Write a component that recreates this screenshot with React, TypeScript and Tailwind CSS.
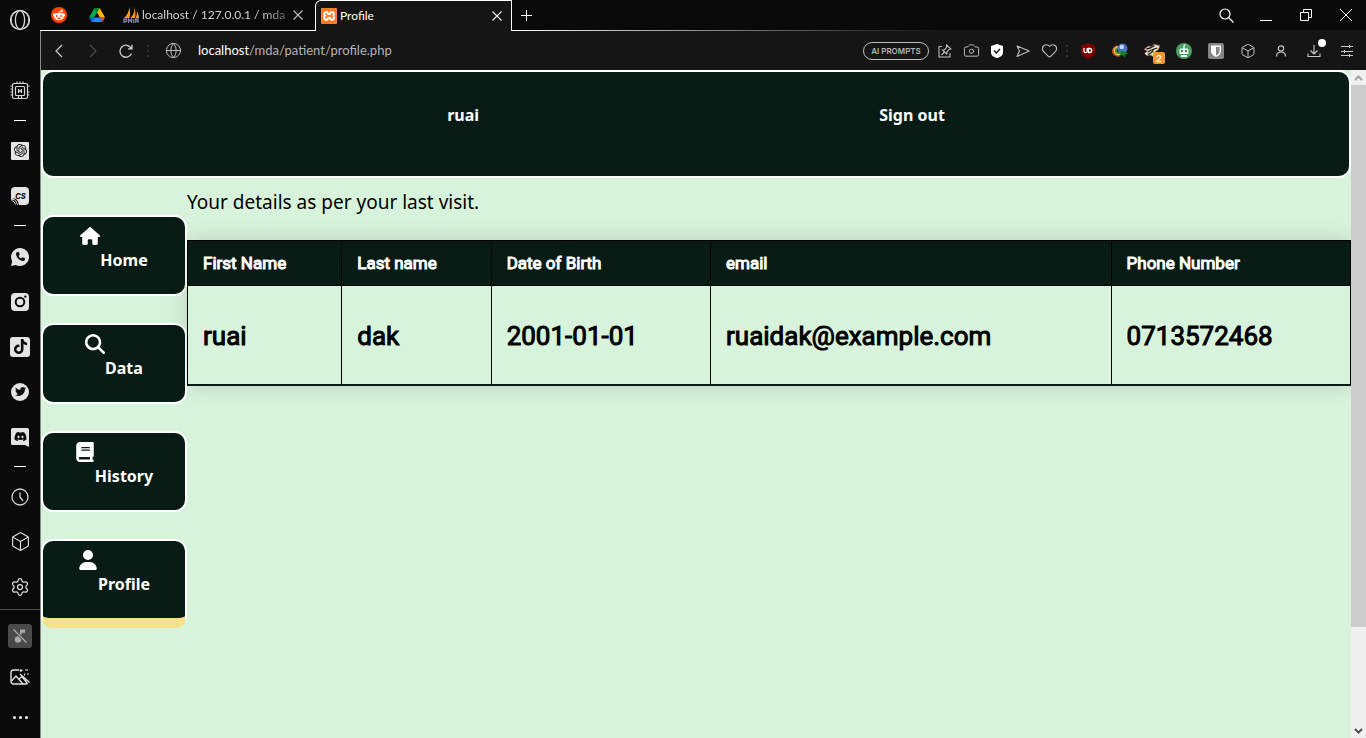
import type { ReactNode } from "react";
import {
  FaBook,
  FaDiscord,
  FaHouse,
  FaMagnifyingGlass,
  FaPhone,
  FaRedditAlien,
  FaTiktok,
  FaTwitter,
  FaUser,
} from "react-icons/fa6";
import { SiOpenai, SiXampp } from "react-icons/si";
import { Box, Camera, Globe, Heart, Settings } from "lucide-react";

const uiFont = "font-['Lato','Noto_Sans',sans-serif]";

function OperaIcon() {
  return (
    <svg width="22" height="22" viewBox="0 0 22 22" fill="none" stroke="#d6d6d6" strokeWidth="1.3">
      <circle cx="11" cy="11" r="9.5" />
      <ellipse cx="11" cy="11" rx="4.6" ry="9.3" />
      <path d="M8 2.4a9.3 9.3 0 0 0 0 17.2M14 2.4a9.3 9.3 0 0 1 0 17.2" strokeWidth="1" />
    </svg>
  );
}

function ChipIcon() {
  return (
    <svg width="20" height="20" viewBox="0 0 20 20" fill="none" stroke="#d6d6d6" strokeWidth="1.2">
      <rect x="2.500" y="2.500" width="15" height="15" rx="1.5" />
      <rect x="5.500" y="5.500" width="9" height="9" rx="1" />
      <path d="M8.6 8v4M11.4 8v4M8.6 10h2.8" strokeWidth="1.3" />
      <path d="M7 2.500V.5M10 2.500V.5M13 2.500V.5M8.500 17.500v-3M11.500 17.500v-3M2.500 5H.5M2.500 8H.5M2.500 11H.5M2.500 14H.5M19.500 5h-2M19.500 11h-2M19.500 14h-2" />
    </svg>
  );
}

function CsIcon() {
  return (
    <svg width="20" height="20" viewBox="0 0 20 20">
      <path d="M5 1h10a4 4 0 0 1 4 4v10a4 4 0 0 1-4 4H9C8.500 16 7 13 4.500 12.500L1 13V5a4 4 0 0 1 4-4z" fill="#e4e4e4" />
      <path d="M1 13.500c2.500-.5 4.500 0 5.500 2.500.5 1 .5 2 1.500 3M1.500 14.500c2 .5 3.500 2 4 4" fill="none" stroke="#e4e4e4" strokeWidth="1" />
      <text x="10.500" y="13" fontSize="7.500" fontWeight="800" fontStyle="italic" textAnchor="middle" fill="#111" fontFamily="Inter, sans-serif">
        CS
      </text>
    </svg>
  );
}

function WhatsappIcon() {
  return (
    <span className="relative flex size-5 items-center justify-center">
      <svg className="absolute inset-0" width="20" height="20" viewBox="0 0 20 20">
        <path d="M10 1a9 9 0 1 1-4.300 16.900L1 19l1.200-4.600A9 9 0 0 1 10 1z" fill="#e4e4e4" />
      </svg>
      <FaPhone className="relative size-[9px] text-[#0c0c0c]" />
    </span>
  );
}

function InstagramIcon() {
  return (
    <svg width="20" height="20" viewBox="0 0 20 20">
      <rect x="1" y="1" width="18" height="18" rx="4" fill="#e4e4e4" />
      <circle cx="10" cy="10" r="4.300" fill="none" stroke="#0c0c0c" strokeWidth="2" />
      <circle cx="15.300" cy="4.600" r="1.200" fill="#0c0c0c" />
    </svg>
  );
}

function DiscordIcon() {
  return (
    <span className="relative flex size-5 items-center justify-center">
      <svg className="absolute inset-0" width="20" height="20" viewBox="0 0 20 20">
        <path d="M2.500 1h15A1.500 1.500 0 0 1 19 2.500V20l-4-2H2.500A1.500 1.500 0 0 1 1 16.500v-14A1.500 1.500 0 0 1 2.500 1z" fill="#e4e4e4" />
      </svg>
      <FaDiscord className="relative size-[13px] text-[#0c0c0c]" />
    </span>
  );
}

function ClockIcon() {
  return (
    <svg width="18" height="18" viewBox="0 0 18 18" fill="none" stroke="#d6d6d6" strokeWidth="1.300">
      <circle cx="9" cy="9" r="8" />
      <path d="M9 4.500V9l3 4" />
    </svg>
  );
}

function MutedMusicIcon() {
  return (
    <svg width="24" height="24" viewBox="0 0 24 24">
      <rect width="24" height="24" rx="3" fill="#4a4a4a" />
      <circle cx="10" cy="15.500" r="3.200" fill="#a9a9a9" />
      <path d="M12 15.500V5.500h5v3.200h-3.500v7z" fill="#a9a9a9" />
      <path d="M5.500 5.500l13 13" stroke="#4a4a4a" strokeWidth="3" />
      <path d="M5.500 5.500l13 13" stroke="#a9a9a9" strokeWidth="1.300" />
    </svg>
  );
}

function ImageSparkleIcon() {
  return (
    <svg width="20" height="18" viewBox="0 0 20 18" fill="none" stroke="#e4e4e4" strokeWidth="1.400">
      <path d="M9 2H3.500A2.500 2.500 0 0 0 1 4.500v9A2.500 2.500 0 0 0 3.500 16h12a2.500 2.500 0 0 0 2-1" />
      <path d="M1.500 13l4.500-5 7 8M9 11l3-2.500 5 6.500" />
      <path d="M10 6l9.500 8.500" />
      <path d="M11 1v3M9.500 2.500h3M15 2h3M17 6h2M14.500 5.500v2" strokeWidth="1.200" />
    </svg>
  );
}

function DriveIcon() {
  return (
    <svg width="16" height="14" viewBox="0 0 87 78">
      <path d="M6.600 66.850l3.850 6.650c.8 1.400 1.950 2.500 3.300 3.300L27.500 53H0c0 1.550.4 3.100 1.200 4.500z" fill="#0066da" />
      <path d="M43.650 25L29.900 1.200c-1.350.8-2.500 1.900-3.300 3.300L1.200 48.500A9 9 0 0 0 0 53h27.500z" fill="#00ac47" />
      <path d="M73.550 76.800c1.350-.8 2.500-1.900 3.300-3.300l9.250-16c.8-1.400.9-2.950.9-4.500H59.800l5.850 11.500z" fill="#ea4335" />
      <path d="M43.650 25L57.400 1.200C56.050.4 54.500 0 52.900 0H34.400c-1.600 0-3.150.45-4.500 1.200z" fill="#00832d" />
      <path d="M59.800 53H27.500L13.750 76.800c1.350.8 2.900 1.200 4.500 1.200h50.800c1.600 0 3.150-.45 4.500-1.200z" fill="#2684fc" />
      <path d="M73.400 26.500l-12.700-22c-.8-1.400-1.950-2.500-3.300-3.300L43.650 25 59.800 53h27.450c0-1.550-.4-3.100-1.200-4.500z" fill="#ffba00" />
    </svg>
  );
}

function PhpMyAdminIcon() {
  return (
    <svg width="16" height="16" viewBox="0 0 16 16">
      <path d="M6 0C6.500 4 4 8.500 1 11h5.500C7.500 7 7.300 3 6 0z" fill="#f89c0e" />
      <path d="M11 0c1 4-.5 8-3.500 11h4.500C13 7 12.300 3 11 0z" fill="#f89c0e" />
      <path d="M13.500 4c.8 2.500.2 5-1 7H16C16 8 15 6 13.500 4z" fill="#e0a04c" />
      <path d="M1 16v-4h2.500v2.500H1M5.500 16v-4l1.500 2 1.500-2v4M10.500 16v-4M12.500 16v-4h2.500v4M12.500 14H15" fill="none" stroke="#7c7fb0" strokeWidth="1.300" />
    </svg>
  );
}

function CloseIcon({ color }: { color: string }) {
  return (
    <svg width="10" height="10" viewBox="0 0 10 10" stroke={color} strokeWidth="1.100">
      <path d="M.5.5l9 9M9.500.5l-9 9" />
    </svg>
  );
}

function PinEditIcon() {
  return (
    <svg width="14" height="14" viewBox="0 0 14 14" fill="none" stroke="#bdbdbd" strokeWidth="1.100">
      <path d="M4 2.500H1v10.500h11V9" />
      <path d="M8.500 1l4.500 4-2 .4-2 2.400-.2 2.200L4.500 6l2-.3L8.500 3.500zM6.500 8L3.500 11" />
    </svg>
  );
}

function VerifiedShieldIcon() {
  return (
    <svg width="14" height="16" viewBox="0 0 14 16">
      <path d="M7 1l6 2v6.500c0 3-3 5-6 5.500-3-.5-6-2.500-6-5.500V3z" fill="#fff" />
      <path d="M4 7.500L6.300 10 10 6" fill="none" stroke="#151515" strokeWidth="1.400" />
    </svg>
  );
}

function SendIcon() {
  return (
    <svg width="14" height="14" viewBox="0 0 14 14" fill="none" stroke="#bdbdbd" strokeWidth="1.100" strokeLinejoin="round">
      <path d="M1 2l12.300 5L1 12.500 3.500 7z" />
    </svg>
  );
}

function AdShieldIcon() {
  return (
    <svg width="16" height="18" viewBox="0 0 16 18">
      <path d="M8 1c2 1.300 4 1.800 7 2v6c0 4-3 6.500-7 8-4-1.500-7-4-7-8V3c3-.2 5-.7 7-2z" fill="#800000" />
      <path d="M4 6v3a1.500 1.500 0 0 0 3.200 0V6M8.500 10.500h1.200a2 2 0 0 0 0-4H8.500z" fill="none" stroke="#fff" strokeWidth="1.300" />
    </svg>
  );
}

function DownloadGlobeIcon() {
  return (
    <svg width="17" height="16" viewBox="0 0 17 16">
      <path d="M5 3C1.500 5 0 7 1 9.500 2 12 5 13.500 8 12.500" fill="none" stroke="#e3512b" strokeWidth="1.500" />
      <path d="M6 3.500C3 5 1.800 7 2.600 9 3.500 11 6 12 9 11" fill="none" stroke="#f2d33b" strokeWidth="1.600" />
      <path d="M7 4.500C4.500 5.500 3.600 7 4.200 8.400 5 10 7 10.500 9.500 9.500" fill="none" stroke="#3fa33a" strokeWidth="1.600" />
      <circle cx="10.500" cy="5.500" r="5" fill="#4672c4" />
      <circle cx="9.800" cy="4" r="2.200" fill="#c3d6f3" />
      <path d="M8.500 7.500l8 3-3 1-.5 3-2.500-2.500L7 13l1.500-2.500z" fill="#15821a" />
    </svg>
  );
}

function AnimalIcon() {
  return (
    <svg width="18" height="16" viewBox="0 0 18 16">
      <path d="M1 6.500L5 3l3.500.5L11 1l3 1 3 .5-1.500 4L12 9l1 2-3 2.500-3-1.500-3 1-2.500-2.500L4 8z" fill="#e9ddd0" stroke="#7b4f33" strokeWidth=".8" />
      <path d="M3.500 6l4-1 4-2.500M4.500 9l4-2L14 5M5 11.500l3.500-2 2-2" fill="none" stroke="#16120f" strokeWidth="1.300" />
    </svg>
  );
}

function RobotIcon() {
  return (
    <svg width="16" height="16" viewBox="0 0 16 16">
      <circle cx="8" cy="8" r="8" fill="#4b9f61" />
      <path d="M8 6V2.500M8 2.500l1.500-.800" stroke="#fff" strokeWidth="1.200" />
      <rect x="3.500" y="5.500" width="9" height="5.500" rx="1.500" fill="#fff" />
      <rect x="5" y="7" width="2" height="2" fill="#2f7a45" />
      <rect x="9" y="7" width="2" height="2" fill="#2f7a45" />
      <path d="M5 12h6v2H5z" fill="#fff" />
    </svg>
  );
}

function VaultIcon() {
  return (
    <svg width="16" height="16" viewBox="0 0 16 16">
      <rect width="16" height="16" rx="2" fill="#858585" />
      <path d="M3 2.500h10V8c0 3-2.500 5-5 6-2.500-1-5-3-5-6z" fill="#fff" />
      <path d="M8 4h3.500v4c0 2-1.500 3.500-3.500 4.500z" fill="#858585" />
    </svg>
  );
}

function PersonIcon() {
  return (
    <svg width="12" height="14" viewBox="0 0 12 14" fill="none" stroke="#c8c8c8" strokeWidth="1.200">
      <circle cx="6" cy="4.500" r="2.700" />
      <path d="M1.500 12.500c0-3 2-4.500 4.500-4.500s4.500 1.500 4.500 4.500" />
    </svg>
  );
}

function DownloadIcon() {
  return (
    <svg width="14" height="14" viewBox="0 0 14 14" fill="none" stroke="#c8c8c8" strokeWidth="1.100">
      <path d="M1 9.500v3h12v-3M7 1v8.500M3.500 6.500L7 10l3.500-3.500" />
    </svg>
  );
}

function SlidersIcon() {
  return (
    <svg width="14" height="12" viewBox="0 0 14 12" stroke="#c8c8c8" strokeWidth="1">
      <path d="M1 1.500h12M1 6.500h12M1 10.500h12M9.500 0v3M4.500 5v3M9.500 9v3" />
    </svg>
  );
}

function Chevron({ up, color }: { up?: boolean; color: string }) {
  return (
    <svg width="9" height="6" viewBox="0 0 9 6" fill="none" stroke={color} strokeWidth="2">
      <path d={up ? "M1 5l3.500-3.500L8 5" : "M1 1l3.500 3.500L8 1"} />
    </svg>
  );
}

function RailButton({ label, children }: { label: string; children: ReactNode }) {
  return (
    <button aria-label={label} className="flex h-[45px] w-full items-center justify-center">
      {children}
    </button>
  );
}

function RailDash() {
  return (
    <div className="flex h-[15px] items-center justify-center">
      <span className="h-px w-3 bg-white" />
    </div>
  );
}

function SideRail() {
  return (
    <aside aria-label="Sidebar" className="flex w-10 shrink-0 flex-col bg-[#0a0a0a]">
      <button aria-label="Opera menu" className="mb-7 flex h-10 items-center justify-center">
        <OperaIcon />
      </button>
      <RailButton label="GX Control"><ChipIcon /></RailButton>
      <RailDash />
      <RailButton label="ChatGPT">
        <span className="flex size-[18px] items-center justify-center rounded-[1px] bg-[#e4e4e4]">
          <SiOpenai className="size-[13px] text-[#0c0c0c]" />
        </span>
      </RailButton>
      <RailButton label="ChatSonic"><CsIcon /></RailButton>
      <RailDash />
      <div className="pt-px">
        <RailButton label="WhatsApp"><WhatsappIcon /></RailButton>
        <RailButton label="Instagram"><InstagramIcon /></RailButton>
        <RailButton label="TikTok">
          <span className="flex size-5 items-center justify-center rounded-[3px] bg-[#e4e4e4]">
            <FaTiktok className="size-[15px] text-[#0c0c0c]" />
          </span>
        </RailButton>
        <RailButton label="Twitter">
          <span className="flex size-[18px] items-center justify-center rounded-full bg-[#e4e4e4]">
            <FaTwitter className="size-[11px] text-[#0c0c0c]" />
          </span>
        </RailButton>
        <RailButton label="Discord"><DiscordIcon /></RailButton>
      </div>
      <RailDash />
      <RailButton label="History"><ClockIcon /></RailButton>
      <RailButton label="Extensions"><Box size={21} strokeWidth={1.3} color="#e0e0e0" /></RailButton>
      <RailButton label="Settings"><Settings size={20} strokeWidth={1.5} color="#e0e0e0" /></RailButton>
      <div className="mt-auto border-t border-[#4d4d4d] pt-[5px]">
        <button aria-label="Music muted" className="flex h-[41px] w-full items-center justify-center"><MutedMusicIcon /></button>
        <button aria-label="Wallpaper" className="flex h-[41px] w-full items-center justify-center"><ImageSparkleIcon /></button>
        <button aria-label="More" className="flex h-[41px] w-full items-center justify-center gap-[3px]">
          <span className="size-[3px] rounded-full bg-white" />
          <span className="size-[3px] rounded-full bg-white" />
          <span className="size-[3px] rounded-full bg-white" />
        </button>
      </div>
    </aside>
  );
}

function TabStrip() {
  return (
    <div className={`flex h-[31px] text-xs text-[#d2d2d2] ${uiFont}`}>
      <div className="flex min-w-0 border-b border-white">
        <button aria-label="Reddit" className="flex w-[38px] items-center justify-center">
          <span className="flex size-4 items-center justify-center rounded-full bg-[#ff4500]">
            <FaRedditAlien className="size-3 text-white" />
          </span>
        </button>
        <button aria-label="Google Drive" className="flex w-[38px] items-center justify-center"><DriveIcon /></button>
        <div className="flex w-[199px] items-center pr-3 pl-[7px]">
          <PhpMyAdminIcon />
          <span className="ml-[3px] whitespace-nowrap [mask-image:linear-gradient(to_right,black_85%,#0006)]">
            localhost / 127.0.0.1 / mda
          </span>
          <button aria-label="Close tab" className="ml-auto"><CloseIcon color="#bbb" /></button>
        </div>
      </div>
      <div className="flex w-[197px] items-center rounded-tl-[6px] border-x border-t border-white bg-[#151515] pr-[9px] pl-[5px] text-white">
        <span className="flex size-4 items-center justify-center rounded-[2px] bg-white">
          <SiXampp className="size-4 text-[#fb7a24]" />
        </span>
        <span className="ml-[3px]">Profile</span>
        <button aria-label="Close tab" className="ml-auto"><CloseIcon color="#eee" /></button>
      </div>
      <div className="flex min-w-0 flex-1 flex-col">
        <div className="flex flex-1 items-center">
          <button aria-label="New tab" className="ml-[7px] flex w-[15px] justify-center">
            <svg width="11" height="11" viewBox="0 0 11 11" stroke="#fff"><path d="M5.500 0v11M0 5.500h11" /></svg>
          </button>
          <button aria-label="Search tabs" className="ml-auto flex w-10 justify-center">
            <svg width="15" height="15" viewBox="0 0 15 15" fill="none" stroke="#fff" strokeWidth="1.200">
              <circle cx="6" cy="6" r="5" />
              <path d="M9.500 9.500l5 5" />
            </svg>
          </button>
          <button aria-label="Minimise" className="flex h-3 w-10 items-end justify-center"><span className="h-px w-3 bg-white" /></button>
          <button aria-label="Restore" className="flex w-10 justify-center">
            <svg width="12" height="12" viewBox="0 0 12 12" fill="none" stroke="#fff"><path d="M.5 3.500h8v8h-8zM3.500 3.500v-3h8v8h-3" /></svg>
          </button>
          <button aria-label="Close window" className="flex w-10 justify-center">
            <svg width="12" height="12" viewBox="0 0 12 12" stroke="#fff"><path d="M0 0l12 12M12 0L0 12" /></svg>
          </button>
        </div>
        <div className="h-px bg-linear-to-r from-white to-[#151515] to-50%" />
      </div>
    </div>
  );
}

function Dots() {
  return (
    <span className="flex w-[10px] flex-col items-center gap-[3px]">
      <span className="size-0.5 bg-[#333]" />
      <span className="size-0.5 bg-[#333]" />
      <span className="size-0.5 bg-[#333]" />
    </span>
  );
}

const pageTools: [string, ReactNode][] = [
  ["Pin page", <PinEditIcon />],
  ["Snapshot", <Camera size={17} strokeWidth={1.4} color="#bdbdbd" />],
  ["Ad blocker", <VerifiedShieldIcon />],
  ["Send to My Flow", <SendIcon />],
  ["Bookmark", <Heart size={17} strokeWidth={1.6} color="#bdbdbd" />],
];

const extensions: [string, ReactNode][] = [
  ["uBlock", <AdShieldIcon />],
  ["Download manager", <DownloadGlobeIcon />],
  [
    "Privacy extension",
    <>
      <AnimalIcon />
      <span className="absolute -right-1 -bottom-[5px] flex h-3 w-3 items-center justify-center rounded-[2px] bg-[#f2962b] text-[10px] leading-none font-bold text-white">
        2
      </span>
    </>,
  ],
  ["Robot extension", <RobotIcon />],
  ["Password vault", <VaultIcon />],
  ["Extensions", <Box size={16} strokeWidth={1.5} color="#c8c8c8" />],
];

function AddressBar() {
  return (
    <div className={`flex h-[39px] items-center bg-[#151515] pr-[3px] text-[13px] ${uiFont}`}>
      <button aria-label="Back" className="flex w-9 justify-center">
        <svg width="8" height="14" viewBox="0 0 8 14" fill="none" stroke="#d0d0d0" strokeWidth="1.200"><path d="M7 1L1 7l6 6" /></svg>
      </button>
      <button aria-label="Forward" className="flex w-8 justify-center">
        <svg width="8" height="14" viewBox="0 0 8 14" fill="none" stroke="#4a4a4a" strokeWidth="1.200"><path d="M1 1l6 6-6 6" /></svg>
      </button>
      <button aria-label="Reload" className="flex w-[34px] justify-center">
        <svg width="14" height="14" viewBox="0 0 14 14" fill="none" stroke="#d0d0d0" strokeWidth="1.300">
          <path d="M12.500 9.500a6 6 0 1 1-.3-5.200M13 .8v4H9" />
        </svg>
      </button>
      <Dots />
      <Globe className="ml-3" size={17} strokeWidth={1.4} color="#bdbdbd" />
      <p className="ml-4 flex-1 text-[#b4b4b4]">
        <span className="text-white">localhost</span>/mda/patient/profile.php
      </p>
      <button className="mr-[3px] flex h-[18px] w-[66px] items-center justify-center rounded-full border border-[#bdbdbd] font-['Inter',sans-serif] text-[8px] font-semibold text-[#b4b4b4]">
        AI PROMPTS
      </button>
      {pageTools.map(([label, icon]) => (
        <button key={label} aria-label={label} className="flex w-[26px] justify-center">{icon}</button>
      ))}
      <Dots />
      {extensions.map(([label, icon]) => (
        <button key={label} aria-label={label} className="flex w-8 justify-center">
          <span className="relative flex">{icon}</span>
        </button>
      ))}
      <button aria-label="Account" className="flex w-[33px] justify-center"><PersonIcon /></button>
      <button aria-label="Downloads" className="flex w-[33px] justify-center">
        <span className="relative">
          <DownloadIcon />
          <span className="absolute -top-[5px] -right-[5px] size-2 rounded-full bg-white" />
        </span>
      </button>
      <button aria-label="Easy setup" className="flex w-[33px] justify-center"><SlidersIcon /></button>
    </div>
  );
}

const navItems = [
  { label: "Home", Icon: FaHouse, active: false },
  { label: "Data", Icon: FaMagnifyingGlass, active: false },
  { label: "History", Icon: FaBook, active: false },
  { label: "Profile", Icon: FaUser, active: true },
];

const columns = [
  ["First Name", "ruai"],
  ["Last name", "dak"],
  ["Date of Birth", "2001-01-01"],
  ["email", "ruaidak@example.com"],
  ["Phone Number", "0713572468"],
];

function ProfilePage() {
  return (
    <div className="min-w-0 flex-1 bg-[#d8f3dc] font-['Noto_Sans','Open_Sans',sans-serif] text-black">
      <header className="flex h-[108px] justify-evenly rounded-xl border-2 border-white bg-[#081c15] px-1 pt-[31px] font-bold text-white">
        <a href="#ruai">ruai</a>
        <a href="#signout">Sign out</a>
      </header>
      <div className="flex items-start">
        <nav className="flex w-[146px] shrink-0 flex-col gap-[27px] pt-[37px]">
          {navItems.map(({ label, Icon, active }) => (
            <a
              key={label}
              href={`#${label.toLowerCase()}`}
              className={`flex justify-center rounded-xl border-2 border-white bg-[#081c15] pt-[9px] font-bold text-white ${
                active ? "h-[89px] border-b-10 border-b-[#f5e187]" : "h-[81px]"
              }`}
            >
              <Icon className="h-5 w-auto" />
              <span className="mt-[22px]">{label}</span>
            </a>
          ))}
        </nav>
        <main className="min-w-0 flex-1">
          <p className="mt-2 text-[19px] leading-8">Your details as per your last visit.</p>
          <table className="mt-[22px] w-full border-collapse text-left font-['Roboto',sans-serif] shadow-[0_0_20px_rgba(0,0,0,0.15)]">
            <thead>
              <tr className="h-[45px] bg-[#081c15] text-[17px] text-white">
                {columns.map(([name]) => (
                  <th key={name} className="border border-black px-[15px] pt-0.5 font-normal [-webkit-text-stroke:1px_currentColor]">{name}</th>
                ))}
              </tr>
            </thead>
            <tbody>
              <tr className="h-[99px] border-b-2 border-[#081c15] text-[26px]">
                {columns.map(([name, value]) => (
                  <td key={name} className="border-x border-x-black px-[15px] pt-1 [-webkit-text-stroke:1px_currentColor]">{value}</td>
                ))}
              </tr>
            </tbody>
          </table>
        </main>
      </div>
    </div>
  );
}

function Scrollbar() {
  return (
    <div className="flex w-[15px] shrink-0 flex-col bg-[#f0f0f0]">
      <button aria-label="Scroll up" className="flex h-[15px] items-center justify-center"><Chevron up color="#a3a3a3" /></button>
      <div className="flex-1">
        <div className="h-[85%] bg-[#cdcdcd]" />
      </div>
      <button aria-label="Scroll down" className="flex h-[15px] items-center justify-center"><Chevron color="#505050" /></button>
    </div>
  );
}

export default function App() {
  return (
    <div className="flex min-h-screen bg-[#0a0a0a]">
      <SideRail />
      <div className="flex min-w-0 flex-1 flex-col">
        <TabStrip />
        <div className="flex flex-1 flex-col border-l border-[#8a8a8a]">
          <AddressBar />
          <div className="flex flex-1">
            <ProfilePage />
            <Scrollbar />
          </div>
        </div>
      </div>
    </div>
  );
}
